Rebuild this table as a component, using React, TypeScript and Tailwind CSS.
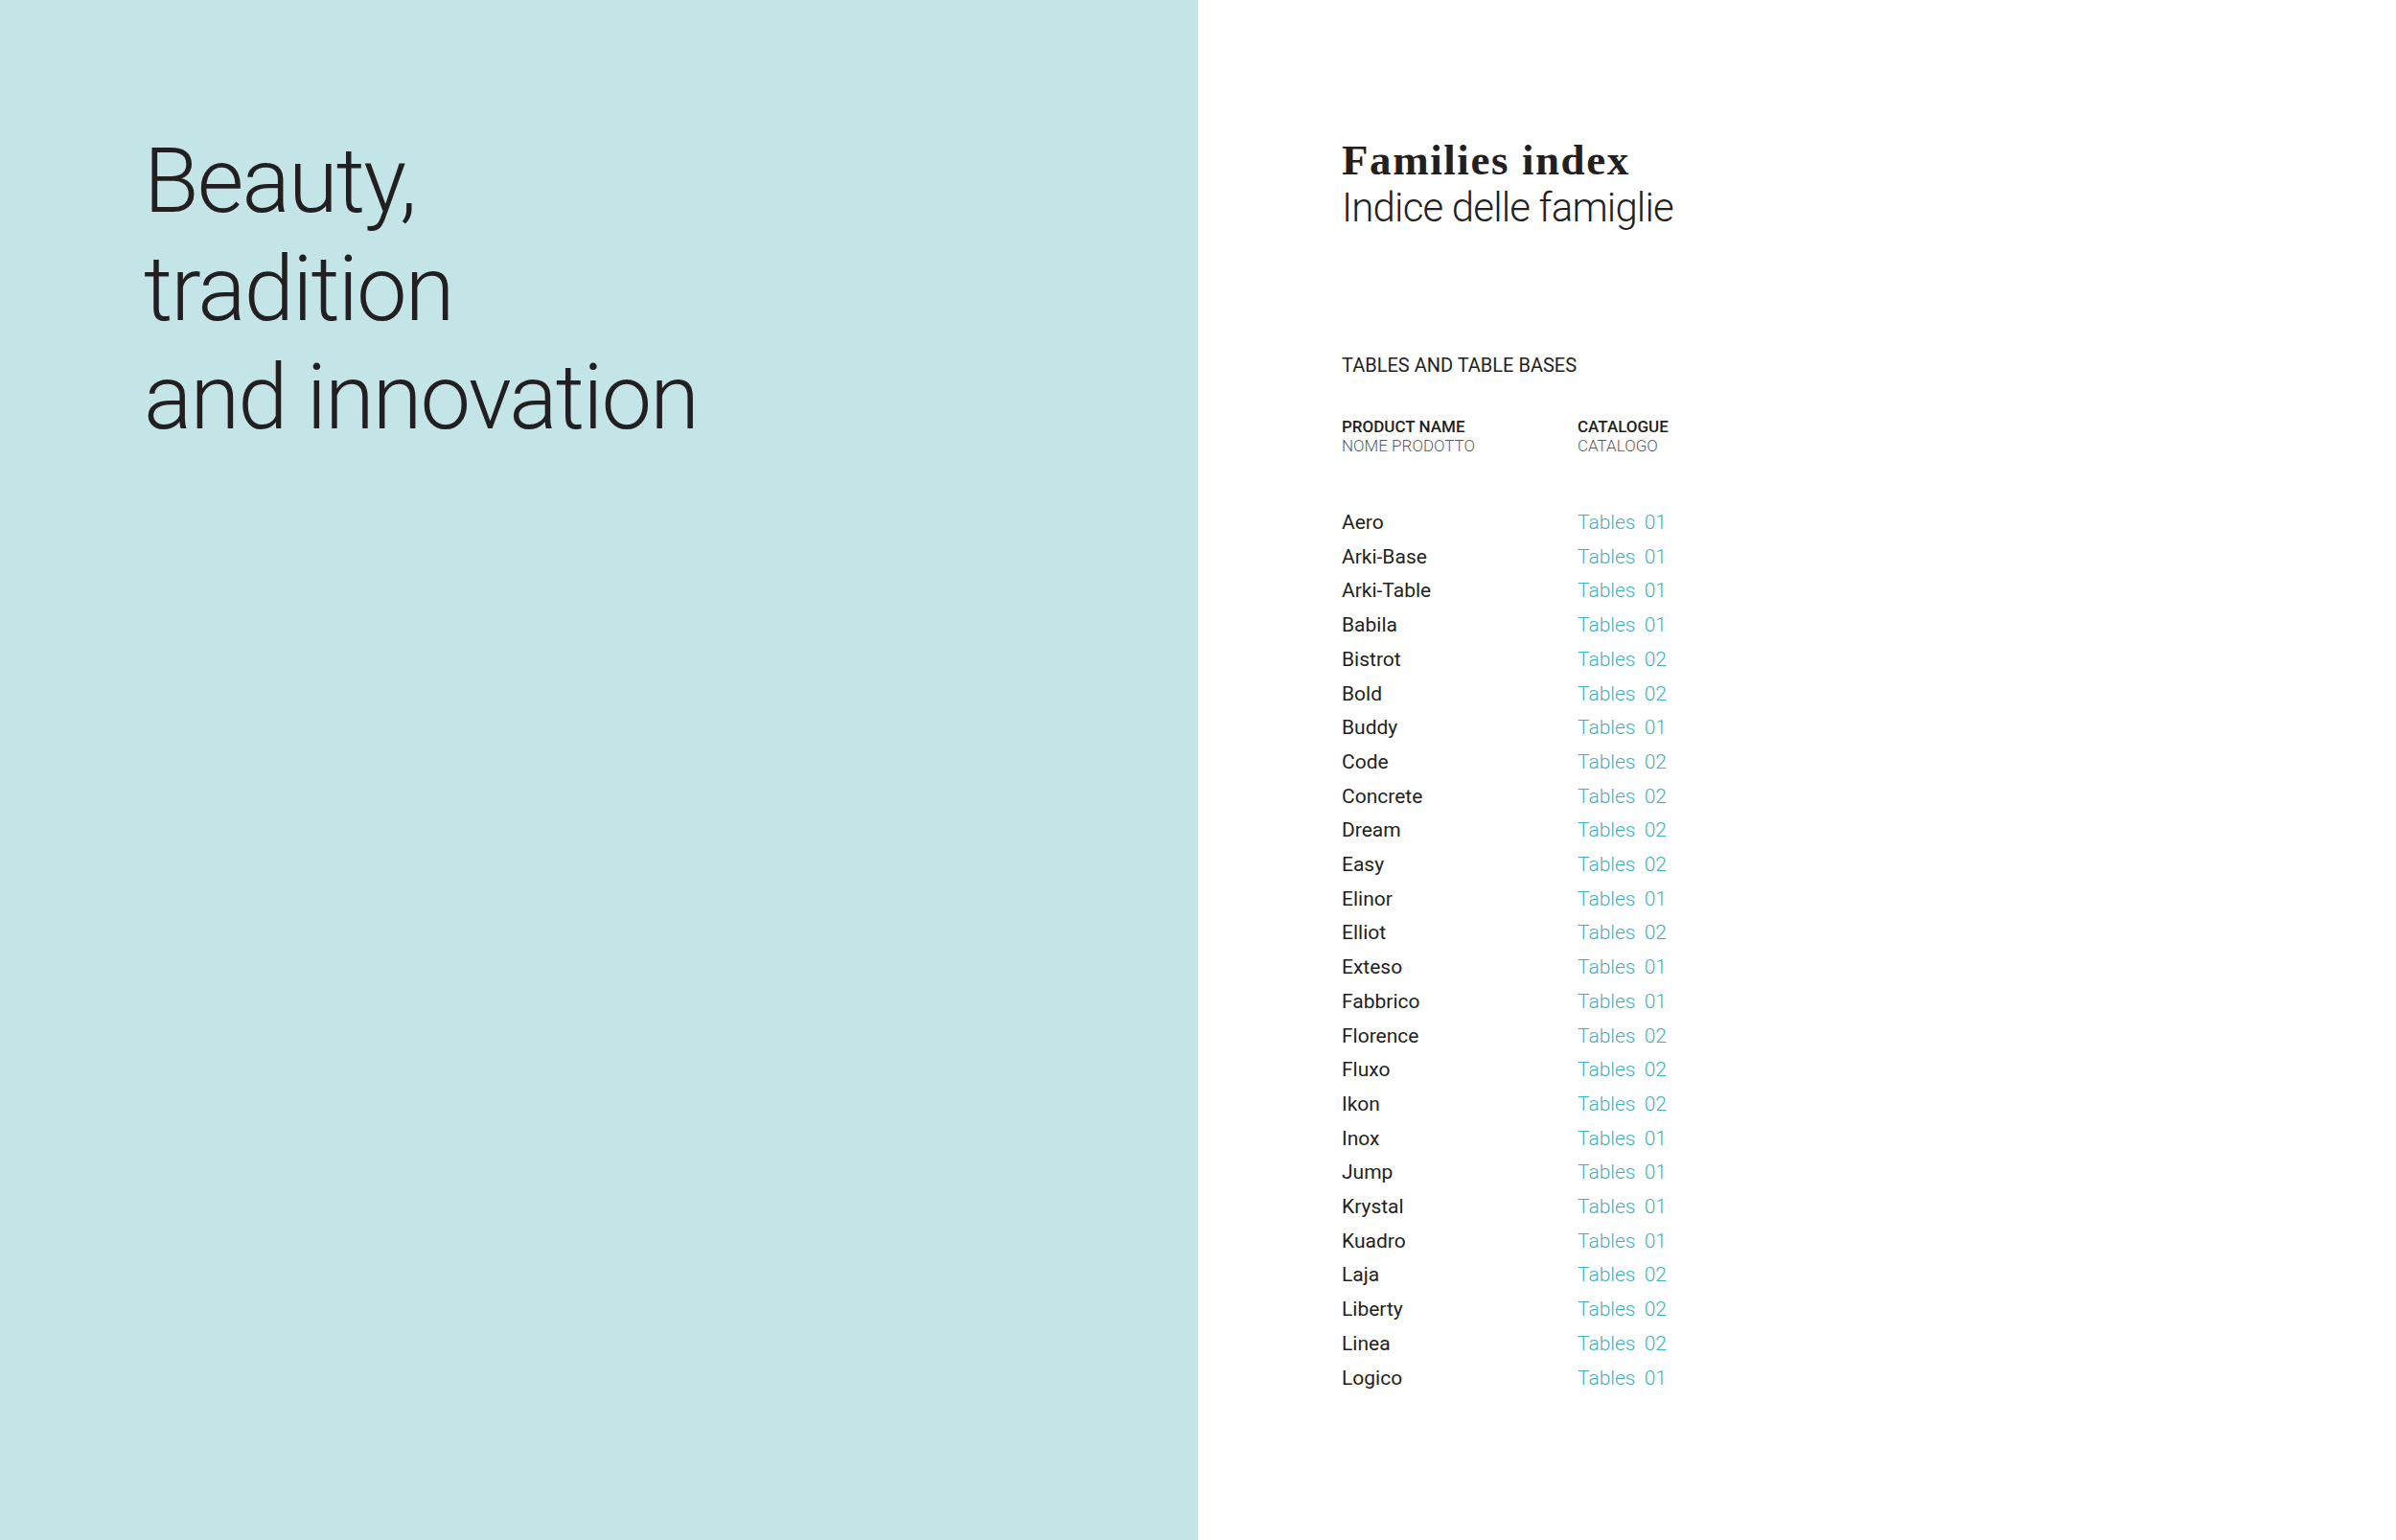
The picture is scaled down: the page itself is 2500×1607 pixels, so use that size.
import React from 'react';

const families: [string, string][] = [
  ['Aero', '01'],
  ['Arki-Base', '01'],
  ['Arki-Table', '01'],
  ['Babila', '01'],
  ['Bistrot', '02'],
  ['Bold', '02'],
  ['Buddy', '01'],
  ['Code', '02'],
  ['Concrete', '02'],
  ['Dream', '02'],
  ['Easy', '02'],
  ['Elinor', '01'],
  ['Elliot', '02'],
  ['Exteso', '01'],
  ['Fabbrico', '01'],
  ['Florence', '02'],
  ['Fluxo', '02'],
  ['Ikon', '02'],
  ['Inox', '01'],
  ['Jump', '01'],
  ['Krystal', '01'],
  ['Kuadro', '01'],
  ['Laja', '02'],
  ['Liberty', '02'],
  ['Linea', '02'],
  ['Logico', '01']
];

export default function App() {
  return (
    <div className="flex h-[1607px] w-full text-[#231f20] font-['Roboto',sans-serif]">
      {/* Left panel */}
      <section className="w-[1250px] shrink-0 bg-[#c3e5e7] pl-[150px] pt-[133px]">
        <h1 className="text-[94px] leading-[113px] font-light tracking-[-0.02em]">
          Beauty,
          <br />
          tradition
          <br />
          and innovation
        </h1>
      </section>

      {/* Right panel */}
      <section className="flex-1 bg-white pl-[150px] pt-[143px]">
        <h2 className="font-['Liberation_Serif',serif] font-bold text-[45px] leading-[48px] tracking-[0.035em]">
          Families index
        </h2>
        <p className="mt-[2px] text-[42px] leading-[48px] font-light tracking-[-0.02em]">
          Indice delle famiglie
        </p>

        <h3 className="mt-[128px] text-[20px] leading-[24px]">TABLES AND TABLE BASES</h3>

        <div className="mt-[42px] flex text-[17px] leading-[20px]">
          <div className="w-[246px]">
            <p className="font-medium">PRODUCT NAME</p>
            <p className="font-light text-[#5a5a5a]">NOME PRODOTTO</p>
          </div>
          <div>
            <p className="font-medium">CATALOGUE</p>
            <p className="font-light text-[#5a5a5a]">CATALOGO</p>
          </div>
        </div>

        <ul className="mt-[53px] text-[21px] leading-[35.7px]">
          {families.map(([name, num]) => (
            <li key={name} className="flex">
              <span className="w-[246px]">{name}</span>
              <span className="font-light text-[#3fb0c0] [word-spacing:4px]">Tables {num}</span>
            </li>
          ))}
        </ul>
      </section>
    </div>
  );
}
